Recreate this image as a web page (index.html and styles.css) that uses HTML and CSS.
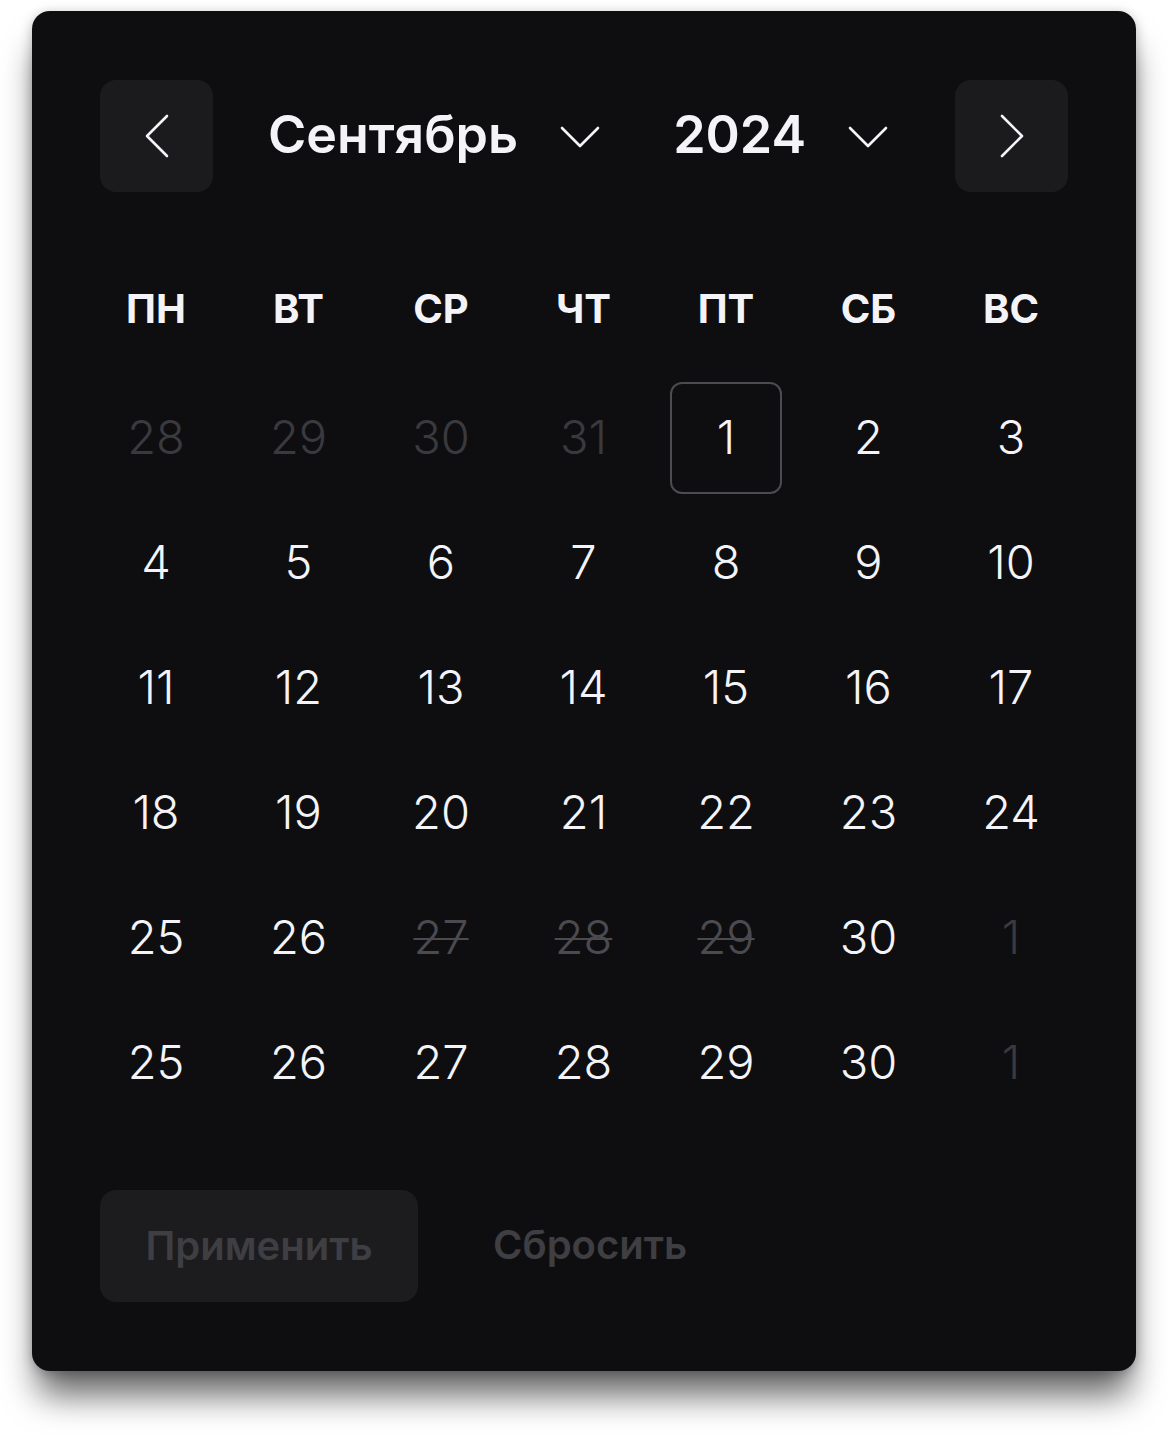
FILE: index.html
```html
<!DOCTYPE html>
<html lang="ru">
<head>
    <meta charset="UTF-8">
    <meta name="viewport" content="width=device-width, initial-scale=1.0">
    <title>Календарь</title>
    <link rel="stylesheet" href="styles.css">
</head>
<body>
    <div class="calendar">
        <div class="cal-header">
            <button class="nav-btn" aria-label="Предыдущий месяц">
                <svg width="24" height="44" viewBox="0 0 24 44"><polyline points="22,2 2,22 22,42" /></svg>
            </button>
            <div class="pickers">
                <div class="picker">
                    <span>Сентябрь</span>
                    <svg width="40" height="22" viewBox="0 0 40 22"><polyline points="2,2 20,20 38,2" /></svg>
                </div>
                <div class="picker">
                    <span>2024</span>
                    <svg width="40" height="22" viewBox="0 0 40 22"><polyline points="2,2 20,20 38,2" /></svg>
                </div>
            </div>
            <button class="nav-btn" aria-label="Следующий месяц">
                <svg width="24" height="44" viewBox="0 0 24 44"><polyline points="2,2 22,22 2,42" /></svg>
            </button>
        </div>

        <div class="weekdays">
            <div>ПН</div><div>ВТ</div><div>СР</div><div>ЧТ</div><div>ПТ</div><div>СБ</div><div>ВС</div>
        </div>

        <div class="days">
            <div class="day muted">28</div>
            <div class="day muted">29</div>
            <div class="day muted">30</div>
            <div class="day muted">31</div>
            <div class="day today">1</div>
            <div class="day">2</div>
            <div class="day">3</div>

            <div class="day">4</div>
            <div class="day">5</div>
            <div class="day">6</div>
            <div class="day">7</div>
            <div class="day">8</div>
            <div class="day">9</div>
            <div class="day">10</div>

            <div class="day">11</div>
            <div class="day">12</div>
            <div class="day">13</div>
            <div class="day">14</div>
            <div class="day">15</div>
            <div class="day">16</div>
            <div class="day">17</div>

            <div class="day">18</div>
            <div class="day">19</div>
            <div class="day">20</div>
            <div class="day">21</div>
            <div class="day">22</div>
            <div class="day">23</div>
            <div class="day">24</div>

            <div class="day">25</div>
            <div class="day">26</div>
            <div class="day disabled">27</div>
            <div class="day disabled">28</div>
            <div class="day disabled">29</div>
            <div class="day">30</div>
            <div class="day muted">1</div>

            <div class="day">25</div>
            <div class="day">26</div>
            <div class="day">27</div>
            <div class="day">28</div>
            <div class="day">29</div>
            <div class="day">30</div>
            <div class="day muted">1</div>
        </div>

        <div class="actions">
            <button class="apply-button" disabled>Применить</button>
            <button class="reset-button" disabled>Сбросить</button>
        </div>
    </div>
</body>
</html>
```

FILE: styles.css
```css
body {
    margin: 0;
    padding-bottom: 70px;
    background-color: white;
    font-family: Inter, "Noto Sans", sans-serif;
}

.calendar {
    width: 1104px;
    height: 1360px;
    margin: 11px 0 0 32px;
    padding: 69px 68px 68px;
    box-sizing: border-box;
    background-color: #0e0e10;
    border-radius: 18px;
    box-shadow: 0 30px 34px -6px rgba(0, 0, 0, 0.6), 0 2px 12px rgba(0, 0, 0, 0.25);
    color: #f4f4f8;
}

.cal-header {
    display: flex;
    align-items: center;
    justify-content: space-between;
    height: 112px;
}

.nav-btn {
    width: 113px;
    height: 112px;
    border: none;
    border-radius: 16px;
    background-color: #1b1b1d;
    display: flex;
    align-items: center;
    justify-content: center;
    padding: 0;
    cursor: pointer;
}

.nav-btn svg polyline,
.picker svg polyline {
    fill: none;
    stroke: #f4f4f8;
    stroke-width: 2.6;
    stroke-linecap: round;
    stroke-linejoin: round;
}

.pickers {
    flex: 1;
    display: flex;
    justify-content: center;
    gap: 73px;
    margin-right: 12px;
}

.picker {
    display: flex;
    align-items: center;
    gap: 42px;
    font-size: 52px;
    font-weight: 600;
}

.picker span {
    margin-top: -4px;
}

.picker svg {
    margin-top: 2px;
}

.weekdays,
.days {
    display: grid;
    grid-template-columns: repeat(7, 112px);
    column-gap: 30.5px;
}

.weekdays {
    margin-top: 86px;
    height: 60px;
    align-items: center;
    text-align: center;
    font-size: 40px;
    font-weight: 700;
}

.days {
    margin-top: 44px;
    grid-auto-rows: 112px;
    row-gap: 13px;
}

.day {
    display: flex;
    align-items: center;
    justify-content: center;
    padding-bottom: 3px;
    box-sizing: border-box;
    font-size: 47px;
    font-weight: 300;
    border-radius: 12px;
}

.day.muted {
    color: #3a3a3e;
}

.day.disabled {
    color: #4a4a4f;
    text-decoration: line-through;
    text-decoration-thickness: 2px;
}

.day.today {
    border: 2px solid #4b4b50;
}

.actions {
    display: flex;
    align-items: center;
    margin-top: 71px;
}

.apply-button,
.reset-button {
    height: 112px;
    border: none;
    padding-bottom: 3px;
    font-family: inherit;
    font-size: 40px;
    font-weight: 600;
    color: #3e3e43;
    background: none;
}

.apply-button {
    width: 318px;
    border-radius: 16px;
    background-color: #1c1c1f;
}

.reset-button {
    margin-left: 55px;
    padding: 0 20px 3px;
}
```
